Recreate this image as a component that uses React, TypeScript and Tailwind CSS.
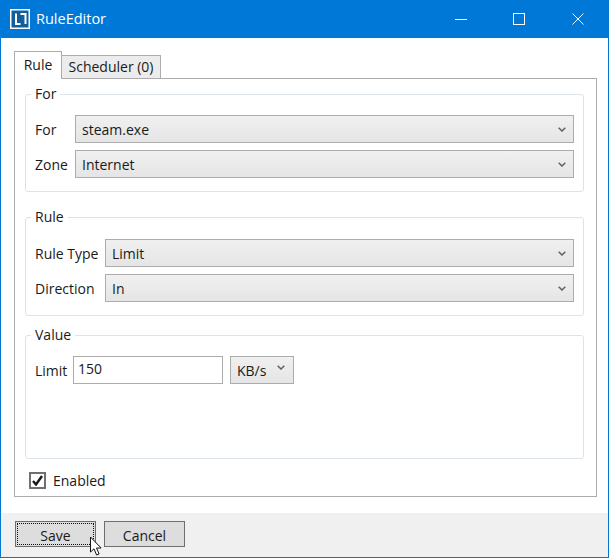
import type { ReactNode } from "react"

const FONT = "font-['Open_Sans','Noto_Sans',sans-serif]"

const Chevron = ({ className = "" }: { className?: string }) => (
  <svg className={className} width="8" height="5" viewBox="0 0 8 5" fill="none">
    <path d="M0.7 0.7L4 4l3.3-3.3" stroke="#606060" strokeWidth="1.5" />
  </svg>
)

const Combo = ({ value, className = "" }: { value: string; className?: string }) => (
  <div className={`h-[28px] flex items-center justify-between border border-[#acacac] bg-gradient-to-b from-[#f0f0f0] to-[#e5e5e5] pl-[6px] pr-[7px] ${className}`}>
    <span>{value}</span>
    <Chevron />
  </div>
)

const GroupBox = ({ title, className = "", children }: { title: string; className?: string; children: ReactNode }) => (
  <fieldset className={`border border-[#dce4ea] rounded-[3px] px-[9px] ${className}`}>
    <legend className="-ml-[4px] px-[4px] h-[20px] leading-[20px]">{title}</legend>
    {children}
  </fieldset>
)

const Row = ({ label, value, labelWidth }: { label: string; value: string; labelWidth: string }) => (
  <div className="flex items-center">
    <span className={labelWidth}>{label}</span>
    <Combo value={value} className="flex-1" />
  </div>
)

export default function App() {
  return (
    <div className={`w-[609px] h-[558px] flex flex-col bg-white border-x border-b border-[#0078d7] text-[14px] text-[#1a1a1a] overflow-hidden relative ${FONT}`}>
      {/* Title bar */}
      <div className="h-[38px] -mx-[1px] bg-[#0078d7] flex items-center pl-[10px] text-white shrink-0">
        <svg width="20" height="20" viewBox="0 0 20 20" fill="none">
          <rect x="0.75" y="0.75" width="18.5" height="18.5" fill="#0f5f9c" stroke="#fff" strokeWidth="1.5" />
          <path d="M6 4.5V15h4.5M10.5 5h5v10" stroke="#fff" strokeWidth="2" />
        </svg>
        <span className="ml-[6px] text-[14.5px]">RuleEditor</span>
        <div className="ml-auto flex items-center">
          <svg className="mr-[46px]" width="12" height="12" viewBox="0 0 12 12">
            <path d="M0 6.5h12" stroke="#fff" />
          </svg>
          <svg className="mr-[47px]" width="12" height="12" viewBox="0 0 12 12" fill="none">
            <rect x="0.5" y="0.5" width="11" height="11" stroke="#fff" />
          </svg>
          <svg className="mr-[25px]" width="12" height="12" viewBox="0 0 12 12">
            <path d="M0.5 0.5l11 11M11.5 0.5l-11 11" stroke="#fff" />
          </svg>
        </div>
      </div>

      {/* Tabs and panel */}
      <div className="flex-1 pt-[13px] pl-[13px] pr-[11px]">
        <div className="flex items-end relative z-10">
          <div className="w-[48px] h-[28px] border border-b-0 border-[#acacac] bg-white flex items-center justify-center -mb-[1px] pb-[3px]">Rule</div>
          <div className="w-[99px] h-[23px] border border-l-0 border-b-0 border-[#acacac] bg-[#ececec] flex items-center justify-center pb-[1px]">Scheduler (0)</div>
        </div>
        <div className="h-[419px] border border-[#acacac] pl-[10px] pr-[12px] pt-[5px]">
          <GroupBox title="For" className="h-[108px]">
            <div className="flex flex-col gap-[7px] pt-[11px]">
              <Row label="For" value="steam.exe" labelWidth="w-[40px]" />
              <Row label="Zone" value="Internet" labelWidth="w-[40px]" />
            </div>
          </GroupBox>
          <GroupBox title="Rule" className="h-[109px] mt-[15px]">
            <div className="flex flex-col gap-[7px] pt-[12px]">
              <Row label="Rule Type" value="Limit" labelWidth="w-[70px]" />
              <Row label="Direction" value="In" labelWidth="w-[70px]" />
            </div>
          </GroupBox>
          <GroupBox title="Value" className="h-[134px] mt-[9px]">
            <div className="flex items-center pt-[11px]">
              <span className="w-[38px]">Limit</span>
              <input
                readOnly
                value="150"
                className="w-[150px] h-[28px] border border-[#acacac] bg-white px-[4px] pb-[3px] outline-none text-[#1a1a1a]"
              />
              <div className="ml-[7px] w-[64px] h-[28px] flex items-center justify-between border border-[#acacac] bg-gradient-to-b from-[#f0f0f0] to-[#e5e5e5] pl-[6px] pr-[8px]">
                <span>KB/s</span>
                <Chevron className="-mt-[5px]" />
              </div>
            </div>
          </GroupBox>
          <label className="flex items-center mt-[11px] ml-[4px]">
            <span className="w-[17px] h-[17px] border-2 border-[#707070] bg-white flex items-center justify-center">
              <svg width="11" height="11" viewBox="0 0 11 11" fill="none">
                <path d="M1 6l3 3.5L10 1" stroke="#1a1a1a" strokeWidth="2.4" />
              </svg>
            </span>
            <span className="ml-[7px]">Enabled</span>
          </label>
        </div>
      </div>

      {/* Footer */}
      <div className="h-[44px] bg-[#f0f0f0] flex items-start gap-[8px] pt-[8px] pl-[14px] shrink-0">
        <button className="w-[81px] h-[26px] pt-[2px] border border-[#6e6e6e] bg-[#dddddd] outline-1 outline-dotted -outline-offset-3 outline-[#111]">Save</button>
        <button className="w-[81px] h-[26px] pt-[2px] border border-[#6e6e6e] bg-[#dddddd]">Cancel</button>
      </div>

      {/* Mouse cursor */}
      <svg className="absolute left-[88px] top-[536px]" width="15" height="21" viewBox="0 0 15 21">
        <path d="M1.5 1v15l3.5-3.2 2.6 6.2 2.5-1-2.6-6h4.6z" fill="#fff" stroke="#111" strokeWidth="1" />
      </svg>
    </div>
  )
}
